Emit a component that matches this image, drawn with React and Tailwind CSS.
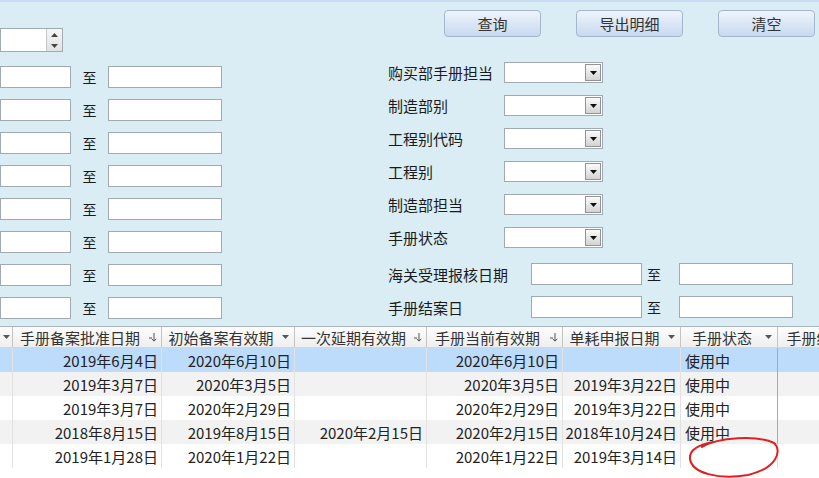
import React from 'react';

const cols = [
    { w: 'w-[13px]', title: '', icon: 'drop' },
    { w: 'w-[149px]', title: '手册备案批准日期', icon: 'sort' },
    { w: 'w-[133px]', title: '初始备案有效期', icon: 'drop' },
    { w: 'w-[132px]', title: '一次延期有效期', icon: 'sort' },
    { w: 'w-[136px]', title: '手册当前有效期', icon: 'sort' },
    { w: 'w-[118px]', title: '单耗申报日期', icon: 'drop' },
    { w: 'w-[97px]', title: '手册状态', icon: 'drop' },
    { w: 'w-[122px]', title: '手册结案日期', icon: 'drop' }
];

const rows = [
    ['2019年6月4日', '2020年6月10日', '', '2020年6月10日', '', '使用中'],
    ['2019年3月7日', '2020年3月5日', '', '2020年3月5日', '2019年3月22日', '使用中'],
    ['2019年3月7日', '2020年2月29日', '', '2020年2月29日', '2019年3月22日', '使用中'],
    ['2018年8月15日', '2019年8月15日', '2020年2月15日', '2020年2月15日', '2018年10月24日', '使用中'],
    ['2019年1月28日', '2020年1月22日', '', '2020年1月22日', '2019年3月14日', '']
];

const rowBg = ['bg-[#bddbfb]', 'bg-[#f2f2f2]', 'bg-white', 'bg-[#f2f2f2]', 'bg-white'];

function DropIcon() {
    return (
        <svg width="7" height="4" viewBox="0 0 7 4">
            <path d="M0 0h7L3.5 4z" fill="#555" />
        </svg>
    );
}

function SortIcon() {
    return (
        <svg width="9" height="9" viewBox="0 0 9 9">
            <path d="M6 0v8M3.8 5.8L6 8.2l2.2-2.4M1 5h3" stroke="#555" strokeWidth="1" fill="none" />
        </svg>
    );
}

function TextBox({ w }) {
    return <div className={`h-[22px] bg-white border border-[#a2aab1] ${w}`} />;
}

function Combo() {
    return (
        <div className="w-[99px] h-[21px] bg-white border border-[#a2aab1] flex justify-end p-[1px]">
            <div className="w-[16px] border border-[#8e9499] bg-linear-to-b from-[#fbfbfb] to-[#d3d3d3] flex items-center justify-center">
                <svg width="7" height="4" viewBox="0 0 7 4">
                    <path d="M0 0h7L3.5 4z" fill="#111" />
                </svg>
            </div>
        </div>
    );
}

function Button({ w, children }) {
    return (
        <button className={`h-[27px] ${w} rounded-[4px] border border-[#a4b6cc] bg-linear-to-b from-[#eef4fc] to-[#c8d9ef] text-[15px] text-[#333] leading-none`}>
            {children}
        </button>
    );
}

export default function App() {
    const comboLabels = ['购买部手册担当', '制造部别', '工程别代码', '工程别', '制造部担当', '手册状态'];
    const dateLabels = ['海关受理报核日期', '手册结案日'];

    return (
        <div className="relative w-[819px] h-[478px] overflow-hidden flex flex-col bg-[#dbedf4] font-['Noto_Sans_CJK_SC','Liberation_Sans',sans-serif] text-[#1a1a1a]">
            <div className="h-[2px] bg-[#c9dcf1] shrink-0" />

            {/* Search form */}
            <div className="h-[324px] shrink-0 flex">
                <div className="w-[222px] flex flex-col">
                    <div className="mt-[26px] w-[63px] h-[24px] bg-white border border-[#a2aab1] flex justify-end">
                        <div className="w-[16px] flex flex-col border-l border-[#c8c8c8] bg-linear-to-b from-[#f6f6f6] to-[#e2e2e2]">
                            <div className="flex-1 flex items-center justify-center">
                                <svg width="7" height="4" viewBox="0 0 7 4"><path d="M0 4h7L3.5 0z" fill="#444" /></svg>
                            </div>
                            <div className="flex-1 flex items-center justify-center">
                                <svg width="7" height="4" viewBox="0 0 7 4"><path d="M0 0h7L3.5 4z" fill="#444" /></svg>
                            </div>
                        </div>
                    </div>
                    <div className="mt-[14px] flex flex-col gap-[11px]">
                        {Array.from({ length: 8 }).map((_, i) => (
                            <div key={i} className="flex items-center h-[22px]">
                                <TextBox w="w-[71px]" />
                                <span className="w-[37px] text-center text-[14px] leading-none">至</span>
                                <TextBox w="w-[114px]" />
                            </div>
                        ))}
                    </div>
                </div>

                <div className="ml-[166px] flex flex-col">
                    <div className="mt-[8px] ml-[56px] flex gap-[35px]">
                        <Button w="w-[97px]">查询</Button>
                        <Button w="w-[107px]">导出明细</Button>
                        <Button w="w-[97px]">清空</Button>
                    </div>
                    <div className="mt-[25px] flex flex-col gap-[12px]">
                        {comboLabels.map((label) => (
                            <div key={label} className="flex items-center h-[21px]">
                                <span className="w-[116px] text-[15px] leading-none">{label}</span>
                                <Combo />
                            </div>
                        ))}
                    </div>
                    <div className="mt-[15px] flex flex-col gap-[11px]">
                        {dateLabels.map((label) => (
                            <div key={label} className="flex items-center h-[22px]">
                                <span className="w-[143px] text-[15px] leading-none">{label}</span>
                                <TextBox w="w-[111px]" />
                                <span className="w-[37px] pl-[5px] text-[14px] leading-none">至</span>
                                <TextBox w="w-[114px]" />
                            </div>
                        ))}
                    </div>
                </div>
            </div>

            {/* Datasheet */}
            <div className="flex-1 flex flex-col bg-white border-t border-[#a9b4bd]">
                <div className="h-[21px] flex shrink-0 bg-linear-to-b from-[#fdfdfd] to-[#eeeeee] border-b border-[#d6d6d6] text-[15px] text-[#333]">
                    {cols.map((c, i) => (
                        <div key={i} className={`${c.w} shrink-0 flex items-center border-r border-[#c4c4c4] ${i === 0 ? 'justify-center' : 'pr-[4px]'}`}>
                            {c.title && <span className="flex-1 text-center leading-none whitespace-nowrap">{c.title}</span>}
                            <span className={`${i === 0 ? '' : 'w-[10px]'} flex justify-center`}>
                                {c.icon === 'sort' ? <SortIcon /> : <DropIcon />}
                            </span>
                        </div>
                    ))}
                </div>
                {rows.map((r, ri) => (
                    <div key={ri} className={`h-[24px] flex shrink-0 ${rowBg[ri]} text-[15px] text-[#222]`}>
                        <div className="w-[13px] shrink-0 border-r border-[#e2e2e2]" />
                        {r.map((v, ci) => (
                            <div
                                key={ci}
                                className={`${cols[ci + 1].w} shrink-0 flex items-center border-r ${ci === 5 ? (ri < 4 ? 'border-[#a9a9a9] pl-[4px]' : 'border-[#e2e2e2] pl-[4px]') : 'border-[#e2e2e2] justify-end pr-[3px]'}`}
                            >
                                <span className="leading-none whitespace-nowrap">{v}</span>
                            </div>
                        ))}
                        <div className="w-[122px] shrink-0" />
                    </div>
                ))}
            </div>

            {/* hand-drawn annotation */}
            <svg className="absolute left-0 top-0 pointer-events-none" width="819" height="478" viewBox="0 0 819 478">
                <path
                    d="M702 447 C718 437 758 435 774 443 C782 450 778 468 748 475 C718 480 692 473 690 459 C689 450 697 445 713 442"
                    stroke="#e02020"
                    strokeWidth="2"
                    fill="none"
                    strokeLinecap="round"
                />
            </svg>
        </div>
    );
}
